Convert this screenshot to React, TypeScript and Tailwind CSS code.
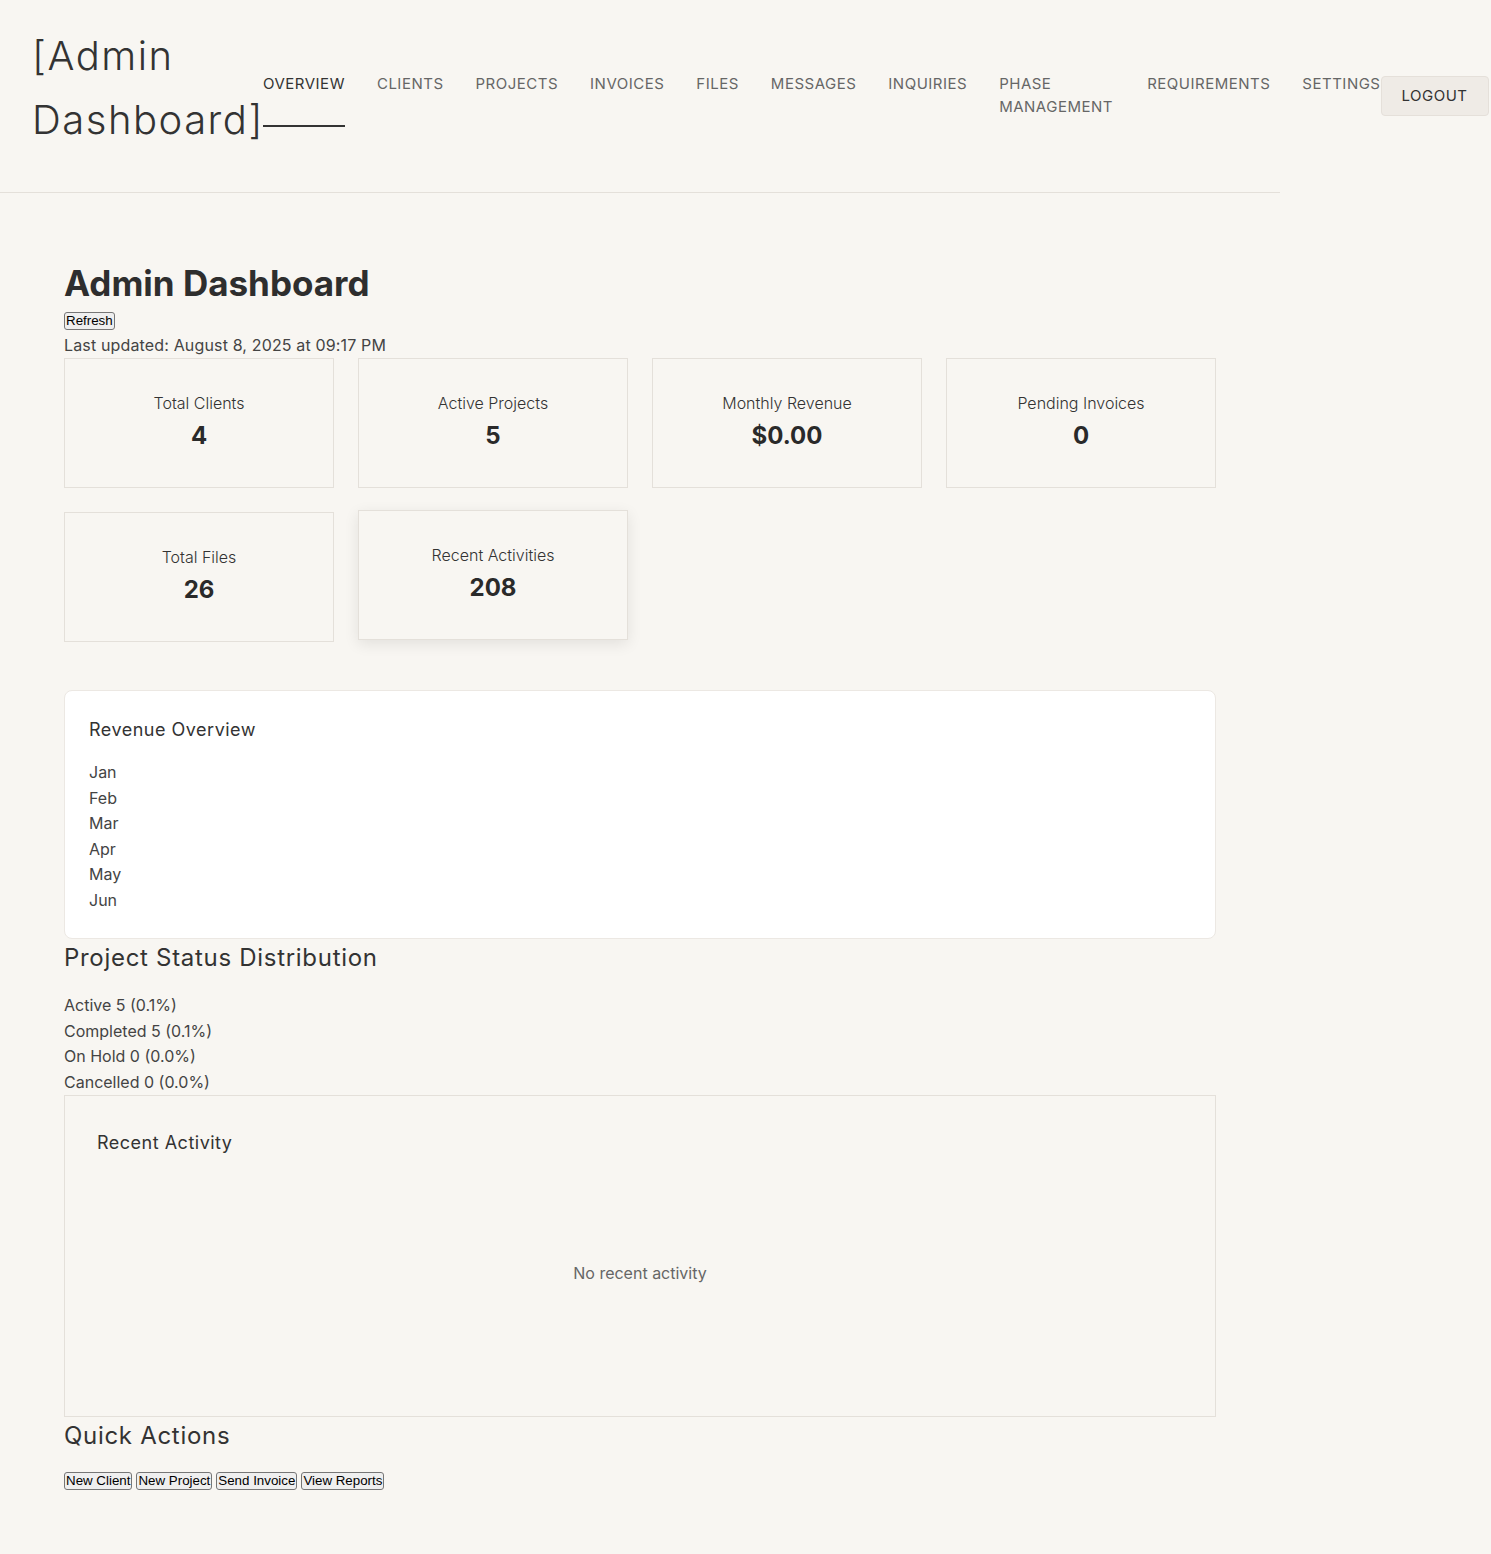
import React from 'react';

const navItems = [
  { label: 'Overview', active: true },
  { label: 'Clients' },
  { label: 'Projects' },
  { label: 'Invoices' },
  { label: 'Files' },
  { label: 'Messages' },
  { label: 'Inquiries' },
  { label: 'Phase Management', wrap: true },
  { label: 'Requirements' },
  { label: 'Settings' },
];

const stats = [
  { label: 'Total Clients', value: '4' },
  { label: 'Active Projects', value: '5' },
  { label: 'Monthly Revenue', value: '$0.00' },
  { label: 'Pending Invoices', value: '0' },
  { label: 'Total Files', value: '26' },
  { label: 'Recent Activities', value: '208', hovered: true },
];

const months = ['Jan', 'Feb', 'Mar', 'Apr', 'May', 'Jun'];

const statuses = [
  'Active 5 (0.1%)',
  'Completed 5 (0.1%)',
  'On Hold 0 (0.0%)',
  'Cancelled 0 (0.0%)',
];

// native-looking button, preflight strips the browser defaults
const NativeButton: React.FC<{ children: React.ReactNode }> = ({ children }) => (
  <button className="bg-[#efefef] border border-[#767676] rounded-[3px] px-[1px] py-[1px] leading-[14px] text-[13.33px] text-black font-['Liberation_Sans',Arial,sans-serif]">
    {children}
  </button>
);

export default function App() {
  return (
    <div className="min-h-[1554px] bg-[#f8f6f2] text-[#2e2e2e] font-['Inter',sans-serif]">
      {/* Header */}
      <header className="w-[1280px] border-b border-[#e4e0da] pl-8 pt-6 pb-10">
        <div className="flex items-start">
          <h1 className="w-[231px] shrink-0 text-[40px] leading-[64px] font-light tracking-[1.5px] text-[#333]">
            [Admin Dashboard]
          </h1>
          <nav className="flex items-start gap-8 mt-[48px] shrink-0">
            {navItems.map((item) => (
              <a
                key={item.label}
                className={`block uppercase text-[15px] leading-[23px] tracking-[0.5px] ${
                  item.active ? 'text-[#333]' : 'text-[#666]'
                } ${item.wrap ? 'w-[116px]' : 'whitespace-nowrap'}`}
              >
                {item.label}
                {item.active && <div className="mt-[30px] h-[2px] bg-[#333]" />}
              </a>
            ))}
          </nav>
          <button className="shrink-0 mt-[52px] h-[40px] px-5 bg-[#efebe6] border border-[#e5e0da] rounded-[4px] uppercase text-[15px] tracking-[0.5px] text-[#333]">
            Logout
          </button>
        </div>
      </header>

      {/* Main */}
      <main className="px-16 pt-[68px] pb-16 w-[1280px]">
        <h2 className="text-[35px] leading-[44px] font-bold text-[#2e2e2e]">Admin Dashboard</h2>
        <div className="mt-[2px]">
          <NativeButton>Refresh</NativeButton>
        </div>
        <p className="text-base leading-[25px] tracking-[0.15px] text-[#444] mt-[2px]">
          Last updated: August 8, 2025 at 09:17 PM
        </p>

        <div className="grid grid-cols-4 gap-6">
          {stats.map((s) => (
            <div
              key={s.label}
              className={`h-[130px] border border-[#e4e0da] bg-[#f8f6f2] flex flex-col items-center pt-8 ${
                s.hovered ? '-translate-y-[2px] shadow-[0_4px_14px_rgba(0,0,0,0.09)]' : ''
              }`}
            >
              <div className="text-base leading-[25px] font-light text-[#333]">{s.label}</div>
              <div className="mt-[4px] text-2xl leading-8 font-bold text-[#2a2a2a]">{s.value}</div>
            </div>
          ))}
        </div>

        {/* Revenue Overview */}
        <section className="mt-12 bg-white border border-[#ece8e3] rounded-lg p-6">
          <h3 className="text-lg leading-[29px] tracking-[0.5px] text-[#333]">Revenue Overview</h3>
          <ul className="mt-4">
            {months.map((m) => (
              <li key={m} className="text-base leading-[25.6px] text-[#444]">
                {m}
              </li>
            ))}
          </ul>
        </section>

        {/* Project Status */}
        <section>
          <h3 className="text-2xl leading-[38.4px] tracking-[0.7px] text-[#333]">Project Status Distribution</h3>
          <ul className="mt-4">
            {statuses.map((s) => (
              <li key={s} className="text-base leading-[25.6px] text-[#444]">
                {s}
              </li>
            ))}
          </ul>
        </section>

        {/* Recent Activity */}
        <section className="border border-[#e4e0da] px-8 pt-8 pb-8">
          <h3 className="text-lg leading-[29px] tracking-[0.5px] text-[#333]">Recent Activity</h3>
          <div className="mt-4 pt-[87px] pb-[98px] text-center text-base leading-[26px] text-[#666]">
            No recent activity
          </div>
        </section>

        {/* Quick Actions */}
        <section>
          <h3 className="text-2xl leading-[38.4px] tracking-[0.7px] text-[#333]">Quick Actions</h3>
          <div className="mt-4 flex gap-1">
            <NativeButton>New Client</NativeButton>
            <NativeButton>New Project</NativeButton>
            <NativeButton>Send Invoice</NativeButton>
            <NativeButton>View Reports</NativeButton>
          </div>
        </section>
      </main>
    </div>
  );
}
